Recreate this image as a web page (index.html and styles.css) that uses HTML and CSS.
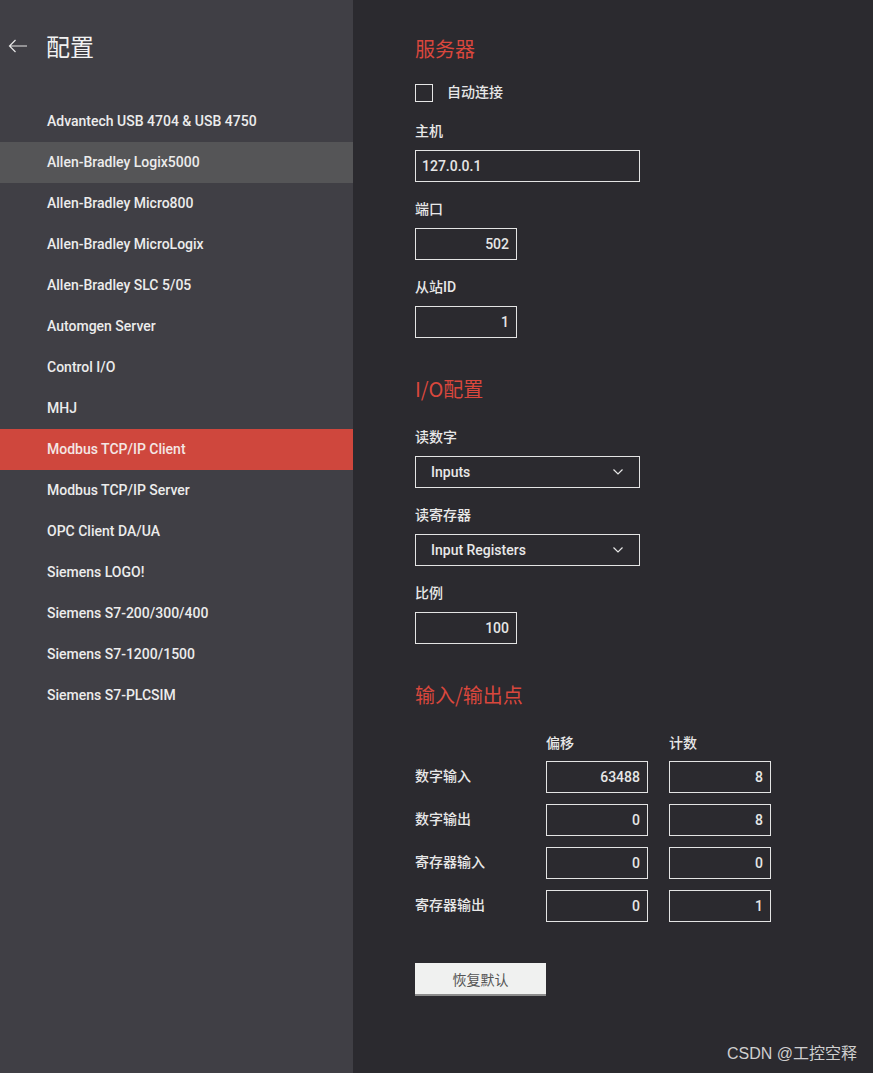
FILE: index.html
```html
<!DOCTYPE html>
<html lang="zh">
<head>
<meta charset="utf-8">
<title>配置</title>
<link rel="stylesheet" href="styles.css">
</head>
<body>
<div class="app">
  <aside class="sidebar">
    <div class="side-head">
      <svg class="back" width="20" height="14" viewBox="0 0 20 14"><path d="M19 7H1.5M7.5 1L1.5 7l6 6" fill="none" stroke="#e6e6e6" stroke-width="1.2"/></svg>
      <span class="side-title">配置</span>
    </div>
    <ul class="nav">
      <li>Advantech USB 4704 &amp; USB 4750</li>
      <li class="hover">Allen-Bradley Logix5000</li>
      <li>Allen-Bradley Micro800</li>
      <li>Allen-Bradley MicroLogix</li>
      <li>Allen-Bradley SLC 5/05</li>
      <li>Automgen Server</li>
      <li>Control I/O</li>
      <li>MHJ</li>
      <li class="active">Modbus TCP/IP Client</li>
      <li>Modbus TCP/IP Server</li>
      <li>OPC Client DA/UA</li>
      <li>Siemens LOGO!</li>
      <li>Siemens S7-200/300/400</li>
      <li>Siemens S7-1200/1500</li>
      <li>Siemens S7-PLCSIM</li>
    </ul>
  </aside>
  <main class="main">
    <h2 class="heading">服务器</h2>
    <label class="check-row"><span class="checkbox"></span><span class="check-label">自动连接</span></label>
    <div class="fields">
      <div class="field"><div class="label">主机</div><div class="input wide left">127.0.0.1</div></div>
      <div class="field"><div class="label">端口</div><div class="input narrow">502</div></div>
      <div class="field"><div class="label">从站ID</div><div class="input narrow">1</div></div>
    </div>
    <h2 class="heading h2-gap">I/O配置</h2>
    <div class="fields io">
      <div class="field"><div class="label">读数字</div><div class="select">Inputs<svg width="10" height="6" viewBox="0 0 10 6"><path d="M0.5 0.5L5 5L9.5 0.5" fill="none" stroke="#e6e6e6" stroke-width="1.2"/></svg></div></div>
      <div class="field"><div class="label">读寄存器</div><div class="select">Input Registers<svg width="10" height="6" viewBox="0 0 10 6"><path d="M0.5 0.5L5 5L9.5 0.5" fill="none" stroke="#e6e6e6" stroke-width="1.2"/></svg></div></div>
      <div class="field"><div class="label">比例</div><div class="input narrow">100</div></div>
    </div>
    <h2 class="heading h2-gap">输入/输出点</h2>
    <div class="points">
      <div class="ph"></div><div class="ph">偏移</div><div class="ph">计数</div>
      <div class="pl">数字输入</div><div class="input cell">63488</div><div class="input cell">8</div>
      <div class="pl">数字输出</div><div class="input cell">0</div><div class="input cell">8</div>
      <div class="pl">寄存器输入</div><div class="input cell">0</div><div class="input cell">0</div>
      <div class="pl">寄存器输出</div><div class="input cell">0</div><div class="input cell">1</div>
    </div>
    <button class="reset">恢复默认</button>
    <div class="watermark">CSDN @工控空释</div>
  </main>
</div>
</body>
</html>
```
FILE: styles.css
```css
* { box-sizing: border-box; }
html, body { margin: 0; padding: 0; }
body {
  font-family: Roboto, "Noto Sans CJK SC", sans-serif;
  background: #2b2a2f;
  color: #e8e8e8;
}
.app { display: flex; width: 873px; height: 1073px; overflow: hidden; }
.sidebar { width: 353px; flex: none; background: #403f45; height: 100%; }
.side-head { height: 92px; display: flex; align-items: center; padding-left: 8px; }
.back { display: block; margin-right: 18px; }
.side-title { font-size: 24px; color: #f2f2f2; font-family: "Noto Sans CJK SC", sans-serif; line-height: 30px; }
.nav { list-style: none; margin: 9px 0 0; padding: 0; }
.nav li {
  height: 41px; line-height: 41px; padding-left: 47px;
  font-size: 14px; font-weight: 500; color: #ececec;
}
.nav li.hover { background: #555557; }
.nav li.active { background: #cf473d; color: #f4e6e4; }

.main { flex: 1; padding: 35px 0 0 62px; position: relative; }
.heading { margin: 0; font-size: 20px; line-height: 28px; font-weight: 400; color: #d9473d; font-family: "Noto Sans CJK SC", sans-serif; }
.h2-gap { margin-top: 37px; }
.check-row { display: flex; align-items: center; margin-top: 21px; height: 18px; }
.checkbox { width: 18px; height: 18px; border: 1.5px solid #e6e6e6; margin-right: 14px; }
.check-label { font-size: 14px; font-weight: 500; line-height: 18px; margin-top: -3px; }
.fields { display: flex; flex-direction: column; gap: 17px; margin-top: 19px; }
.fields.io { margin-top: 24px; }
.label { font-size: 14px; line-height: 20px; font-weight: 500; margin-bottom: 9px; }
.input {
  height: 32px; border: 1.5px solid #e4e4e4; display: flex; align-items: center; justify-content: flex-end;
  padding: 0 7px; font-size: 14px; font-weight: 500; color: #e6e6e6;
}
.input.left { justify-content: flex-start; padding-left: 6px; }
.wide { width: 225px; }
.narrow { width: 102px; }
.select {
  width: 225px; height: 32px; border: 1.5px solid #e4e4e4; display: flex; align-items: center;
  justify-content: space-between; padding: 0 16px 0 15px; font-size: 14px; font-weight: 500;
}
.points {
  display: grid; grid-template-columns: 110px 102px 102px; column-gap: 21px; row-gap: 11px;
  grid-template-rows: 17px; margin-top: 24px;
}
.ph { font-size: 14px; line-height: 20px; font-weight: 500; }
.pl { font-size: 14px; font-weight: 500; display: flex; align-items: center; white-space: nowrap; padding-bottom: 4px; }
.cell { width: 102px; }
.reset {
  display: block; margin-top: 41px; width: 131px; height: 33px; border: none; border-bottom: 2px solid #8c8c8c;
  background: #f0f1f0; color: #555; font-size: 14px; font-family: "Noto Sans CJK SC", sans-serif; padding: 0;
}
.watermark {
  position: absolute; right: 16px; bottom: 9px; font-size: 16px; color: #cfcfcf;
  font-family: "Liberation Sans", "Noto Sans CJK SC", sans-serif;
}
```
